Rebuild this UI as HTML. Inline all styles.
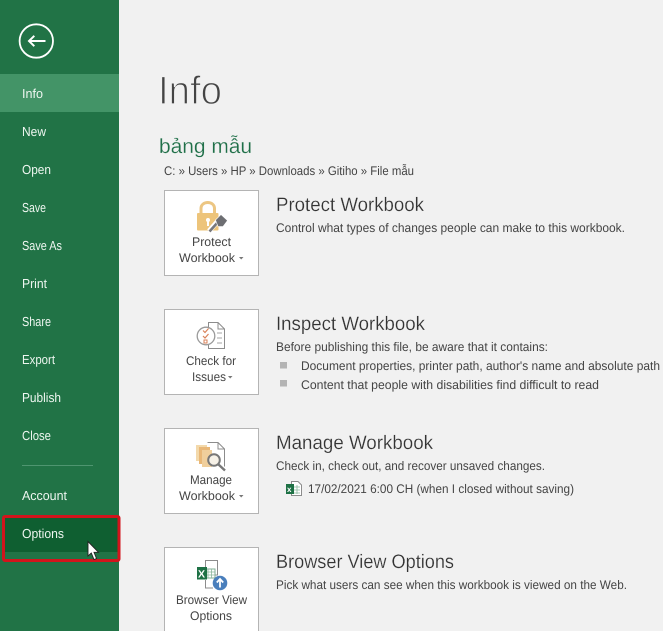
<!DOCTYPE html>
<html>
<head>
<meta charset="utf-8">
<style>
html,body{margin:0;padding:0;background:#f1f1f1;width:663px;height:631px;overflow:hidden}
svg{display:block}
text{font-family:"Liberation Sans","DejaVu Sans",sans-serif;text-rendering:geometricPrecision}
.n{font-size:13px;fill:#eef6f0}
.b{font-size:12.5px;fill:#444}
.h{font-size:19.5px;fill:#333;stroke:#f1f1f1;stroke-width:.2px}
.d{font-size:12.5px;fill:#444}
</style>
</head>
<body>
<svg width="663" height="631" viewBox="0 0 663 631" xmlns="http://www.w3.org/2000/svg">
<rect width="663" height="631" fill="#f1f1f1"/>
<rect width="119" height="631" fill="#217346"/>
<rect y="74" width="119" height="38" fill="#439467"/>
<rect x="4" y="517" width="115" height="35" fill="#0f5f31"/>

<circle cx="36.300" cy="41" r="16.700" fill="none" stroke="#fff" stroke-width="1.800"/>
<path d="M45.500 41H29M34.300 35.800L29 41L34.300 46.200" fill="none" stroke="#fff" stroke-width="2"/>

<text class="n" x="22" y="98" textLength="21" lengthAdjust="spacingAndGlyphs">Info</text>
<text class="n" x="22" y="136" textLength="24" lengthAdjust="spacingAndGlyphs">New</text>
<text class="n" x="22" y="174" textLength="29" lengthAdjust="spacingAndGlyphs">Open</text>
<text class="n" x="22" y="212" textLength="24" lengthAdjust="spacingAndGlyphs">Save</text>
<text class="n" x="22" y="250" textLength="40" lengthAdjust="spacingAndGlyphs">Save As</text>
<text class="n" x="22" y="288" textLength="25" lengthAdjust="spacingAndGlyphs">Print</text>
<text class="n" x="22" y="326" textLength="29" lengthAdjust="spacingAndGlyphs">Share</text>
<text class="n" x="22" y="364" textLength="33" lengthAdjust="spacingAndGlyphs">Export</text>
<text class="n" x="22" y="402" textLength="39" lengthAdjust="spacingAndGlyphs">Publish</text>
<text class="n" x="22" y="440" textLength="29" lengthAdjust="spacingAndGlyphs">Close</text>
<rect x="22" y="465" width="71" height="1" fill="#4f9570"/>
<text class="n" x="22" y="500" textLength="45" lengthAdjust="spacingAndGlyphs">Account</text>
<text class="n" x="22" y="538" textLength="42" lengthAdjust="spacingAndGlyphs">Options</text>

<rect x="3.500" y="516.500" width="115.500" height="44" rx="1.500" fill="none" stroke="#d2141c" stroke-width="3"/>
<path d="M88 541.500V556L91.300 553L94 559.500L96.500 558.500L94 552.300H98.500Z" fill="#fff" stroke="#222" stroke-width=".9"/>

<text x="158" y="104" font-size="40" fill="#444" stroke="#f1f1f1" stroke-width="1.200" textLength="64" lengthAdjust="spacingAndGlyphs">Info</text>
<text x="159" y="153" font-size="20.500" fill="#1f6f48" stroke="#f1f1f1" stroke-width=".2" textLength="93" lengthAdjust="spacingAndGlyphs">bảng mẫu</text>
<text class="d" x="164" y="175" textLength="250" lengthAdjust="spacingAndGlyphs">C: » Users » HP » Downloads » Gitiho » File mẫu</text>

<g fill="#fff" stroke="#b4b4b4">
<rect x="164.500" y="190.500" width="94" height="85"/>
<rect x="164.500" y="309.500" width="94" height="85"/>
<rect x="164.500" y="428.500" width="94" height="85"/>
<rect x="164.500" y="547.500" width="94" height="95"/>
</g>

<!-- lock + key -->
<path d="M201 213V208.500C201 200.500 214.500 200.500 214.500 208.500V213" fill="none" stroke="#ecc683" stroke-width="3"/>
<rect x="197" y="213" width="21.500" height="17.500" rx="1" fill="#edc47a"/>
<circle cx="208" cy="220" r="2" fill="#fff"/><rect x="207" y="220" width="2" height="6" fill="#fff"/>
<path d="M209 231L217 222" stroke="#fff" stroke-width="5"/>
<path d="M209.500 231.500L218 222" stroke="#77787c" stroke-width="2.600"/>
<path d="M215.500 220L221 214.500L227.500 220.500L223 226.500H218Z" fill="#6d6e72" stroke="#fff" stroke-width=".6"/>

<!-- check for issues -->
<path d="M208.500 322.500H218L224.500 329V348.500H208.500Z" fill="#fff" stroke="#8c8c8c"/>
<path d="M218 322.500V329H224.500" fill="none" stroke="#8c8c8c"/>
<path d="M217 333H222M217 338H222M217 343H222" stroke="#a5a5a5"/>
<circle cx="206" cy="336" r="8.800" fill="#fff" stroke="#9a9a9a" stroke-width="1.300"/>
<path d="M203 330.500L205 332.500L208.500 328.500M203 336L205 338L208.500 334" fill="none" stroke="#d9825a" stroke-width="1.200"/>
<rect x="204" y="340" width="3" height="3" fill="none" stroke="#d9825a"/>

<!-- manage -->
<rect x="196" y="445" width="11" height="16" fill="#f3d9ab"/>
<rect x="199" y="447" width="11" height="17" fill="#e9b878"/>
<rect x="202" y="450" width="10" height="17" fill="#f0cf9c"/>
<path d="M207.500 442.500H218L224.500 449V466.500" fill="none" stroke="#8c8c8c"/>
<path d="M218 442.500V449H224.500" fill="none" stroke="#8c8c8c"/>
<circle cx="214" cy="460" r="5.800" fill="#f6f1e7" stroke="#777" stroke-width="2"/>
<path d="M218.500 464.500L225 470.500" stroke="#777" stroke-width="2.400"/>

<!-- browser view -->
<path d="M205.500 560.500H217.500V575H205.500Z" fill="#fff" stroke="#8c8c8c"/>
<path d="M205.500 580V588H213" fill="none" stroke="#8c8c8c"/>
<rect x="205" y="569" width="10" height="9" fill="#fff" stroke="#7fae93"/>
<path d="M208 569V578M211.500 569V578M205 572H215M205 575H215" stroke="#8bb79d" stroke-width=".8"/>
<rect x="197" y="567" width="10" height="12.500" fill="#1e7145"/>
<text x="198" y="577.500" font-size="10.500" font-weight="bold" fill="#fff">X</text>
<circle cx="220" cy="583" r="7.300" fill="#4a7fbc"/>
<path d="M220 587.500V579.500M216.800 582.500L220 579L223.200 582.500" fill="none" stroke="#fff" stroke-width="1.800"/>

<!-- button labels -->
<text class="b" x="192" y="246" textLength="39" lengthAdjust="spacingAndGlyphs">Protect</text>
<text class="b" x="179" y="262" textLength="56" lengthAdjust="spacingAndGlyphs">Workbook</text>
<path d="M239 257H243.500L241.200 259.500Z" fill="#777"/>
<text class="b" x="186" y="365" textLength="50" lengthAdjust="spacingAndGlyphs">Check for</text>
<text class="b" x="192" y="381" textLength="34" lengthAdjust="spacingAndGlyphs">Issues</text>
<path d="M228 376H232.500L230.200 378.500Z" fill="#777"/>
<text class="b" x="190" y="484" textLength="42" lengthAdjust="spacingAndGlyphs">Manage</text>
<text class="b" x="179" y="500" textLength="56" lengthAdjust="spacingAndGlyphs">Workbook</text>
<path d="M239 495H243.500L241.200 497.500Z" fill="#777"/>
<text class="b" x="176" y="604" textLength="71" lengthAdjust="spacingAndGlyphs">Browser View</text>
<text class="b" x="190" y="620" textLength="42" lengthAdjust="spacingAndGlyphs">Options</text>

<!-- headings / descriptions -->
<text class="h" x="276" y="211" textLength="148" lengthAdjust="spacingAndGlyphs">Protect Workbook</text>
<text class="d" x="276" y="232" textLength="349" lengthAdjust="spacingAndGlyphs">Control what types of changes people can make to this workbook.</text>

<text class="h" x="276" y="330" textLength="149" lengthAdjust="spacingAndGlyphs">Inspect Workbook</text>
<text class="d" x="276" y="351" textLength="272" lengthAdjust="spacingAndGlyphs">Before publishing this file, be aware that it contains:</text>
<rect x="280" y="362" width="7" height="6.500" fill="#b4b4b4"/>
<text class="d" x="301" y="370" textLength="359" lengthAdjust="spacingAndGlyphs">Document properties, printer path, author's name and absolute path</text>
<rect x="280" y="380" width="7" height="6.500" fill="#b4b4b4"/>
<text class="d" x="301" y="389" textLength="298" lengthAdjust="spacingAndGlyphs">Content that people with disabilities find difficult to read</text>

<text class="h" x="276" y="449" textLength="157" lengthAdjust="spacingAndGlyphs">Manage Workbook</text>
<text class="d" x="276" y="470" textLength="269" lengthAdjust="spacingAndGlyphs">Check in, check out, and recover unsaved changes.</text>
<path d="M291.500 481.500H298L301.500 485V495.500H291.500Z" fill="#fff" stroke="#8c8c8c"/>
<path d="M294 487H300M294 490H300M294 493H300M297 485V494" stroke="#8bb79d" stroke-width=".8"/>
<rect x="286" y="484" width="8" height="10" fill="#1e7145"/>
<text x="287" y="492" font-size="8" font-weight="bold" fill="#fff">x</text>
<text class="d" x="308" y="493" textLength="266" lengthAdjust="spacingAndGlyphs">17/02/2021 6:00 CH (when I closed without saving)</text>

<text class="h" x="276" y="568" textLength="178" lengthAdjust="spacingAndGlyphs">Browser View Options</text>
<text class="d" x="276" y="589" textLength="351" lengthAdjust="spacingAndGlyphs">Pick what users can see when this workbook is viewed on the Web.</text>
</svg>
</body>
</html>
